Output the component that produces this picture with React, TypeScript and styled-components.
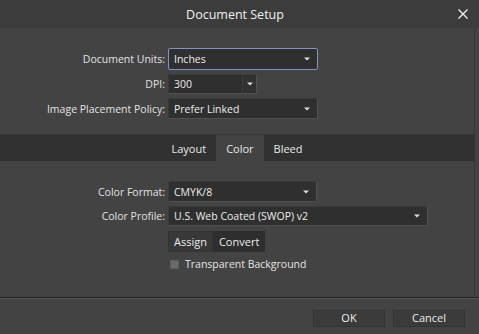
import React from "react";
import styled, { createGlobalStyle } from "styled-components";

const GlobalStyle = createGlobalStyle`
    html, body {
        margin: 0;
        padding: 0;
        background: #434343;
    }
    * {
        box-sizing: border-box;
    }
    body {
        font-family: "Open Sans", "Noto Sans", Arial, sans-serif;
        font-size: 10.5px;
        color: #e4e4e4;
    }
`;

const Arrow = () => (
    <svg width="6" height="4" viewBox="0 0 6 4">
        <path d="M0 0.5 H6 L3 3.5 Z" fill="#dedede" />
    </svg>
);

const App = () => {
    return (
        <>
            <GlobalStyle />
            <Window>
                <TitleBar>
                    <span />
                    <Title>Document Setup</Title>
                    <CloseButton aria-label="close">
                        <svg width="10" height="10" viewBox="0 0 10 10">
                            <path d="M0.5 0.5 L9.5 9.5 M9.5 0.5 L0.5 9.5" stroke="#f2f2f2" strokeWidth="1.3" />
                        </svg>
                    </CloseButton>
                </TitleBar>

                <Body>
                    <Form $top={20}>
                        <Label>Document Units:</Label>
                        <Select $width={150} $height={22} $focused>
                            <span>Inches</span>
                            <Arrow />
                        </Select>
                        <Label>DPI:</Label>
                        <Combo>
                            <ComboText>300</ComboText>
                            <ComboButton>
                                <Arrow />
                            </ComboButton>
                        </Combo>
                        <Label>Image Placement Policy:</Label>
                        <Select $width={150}>
                            <span>Prefer Linked</span>
                            <Arrow />
                        </Select>
                    </Form>

                    <TabStrip>
                        <Tab>Layout</Tab>
                        <Tab $active>Color</Tab>
                        <Tab>Bleed</Tab>
                    </TabStrip>

                    <Form $top={20}>
                        <Label>Color Format:</Label>
                        <Select $width={149} $height={21}>
                            <span>CMYK/8</span>
                            <Arrow />
                        </Select>
                        <Label>Color Profile:</Label>
                        <Select $width={260} $height={20}>
                            <span>U.S. Web Coated (SWOP) v2</span>
                            <Arrow />
                        </Select>
                        <span />
                        <Segmented>
                            <SegButton $active>Assign</SegButton>
                            <SegButton>Convert</SegButton>
                        </Segmented>
                        <span />
                        <CheckRow>
                            <CheckBox />
                            <span>Transparent Background</span>
                        </CheckRow>
                    </Form>

                    <Spacer />
                </Body>

                <Footer>
                    <FooterButton>OK</FooterButton>
                    <FooterButton>Cancel</FooterButton>
                </Footer>
            </Window>
        </>
    );
};

const Window = styled.div`
    width: 479px;
    height: 334px;
    display: flex;
    flex-direction: column;
    background: #434343;
    overflow: hidden;
`;

const TitleBar = styled.div`
    height: 28px;
    flex: none;
    display: grid;
    grid-template-columns: 1fr auto 1fr;
    align-items: center;
    background: #3c3c3c;
    padding-right: 11px;
`;

const Title = styled.div`
    font-size: 12.5px;
    color: #f0f0f0;
    padding-left: 2px;
`;

const CloseButton = styled.div`
    justify-self: end;
    display: flex;
    align-items: center;
    margin-top: -1px;
`;

const Body = styled.div`
    flex: 1;
    display: flex;
    flex-direction: column;
    margin-right: 4px;
    border-right: 1px solid #363636;
`;

const Form = styled.div<{ $top: number }>`
    display: grid;
    grid-template-columns: 165px auto;
    column-gap: 3px;
    row-gap: 4px;
    align-items: center;
    justify-items: start;
    padding-top: ${(p) => p.$top}px;
`;

const Label = styled.div`
    justify-self: end;
    color: #e2e2e2;
    white-space: nowrap;
`;

const Select = styled.div<{ $width: number; $height?: number; $focused?: boolean }>`
    width: ${(p) => p.$width}px;
    height: ${(p) => p.$height ?? 21}px;
    display: flex;
    align-items: center;
    justify-content: space-between;
    padding: 0 7px 0 5px;
    background: #2f2f2f;
    border: 1px solid ${(p) => (p.$focused ? "#7f93c6" : "#3a3a3a")};
    border-right-color: ${(p) => (p.$focused ? "#7f93c6" : "#525252")};
    border-bottom-color: ${(p) => (p.$focused ? "#7f93c6" : "#505050")};
    border-radius: 2px;
    color: #ececec;
`;

const Combo = styled.div`
    width: 89px;
    height: 20px;
    display: flex;
    background: #2f2f2f;
    border: 1px solid #3a3a3a;
    border-right-color: #525252;
    border-bottom-color: #505050;
`;

const ComboText = styled.div`
    flex: 1;
    display: flex;
    align-items: center;
    padding-left: 5px;
    color: #ececec;
`;

const ComboButton = styled.div`
    width: 14px;
    display: flex;
    align-items: center;
    justify-content: center;
    border-left: 1px solid #3d3d3d;
    background: #313131;
`;

const TabStrip = styled.div`
    margin-top: 15px;
    height: 27px;
    display: flex;
    justify-content: center;
    background: #313131;
    border-top: 1px solid #383838;
`;

const Tab = styled.div<{ $active?: boolean }>`
    display: flex;
    align-items: center;
    padding: 0 10px;
    background: ${(p) => (p.$active ? "#434343" : "transparent")};
    color: #e8e8e8;
    font-size: 11px;
`;

const Segmented = styled.div`
    display: flex;
    height: 21px;
    margin-top: 1px;
    background: #2e2e2e;
`;

const SegButton = styled.div<{ $active?: boolean }>`
    display: flex;
    align-items: center;
    padding: 0 5px;
    background: ${(p) => (p.$active ? "#383838" : "#2e2e2e")};
    border: 1px solid ${(p) => (p.$active ? "#333333" : "#2e2e2e")};
    color: #ececec;
    font-size: 11px;
`;

const CheckRow = styled.div`
    display: flex;
    align-items: center;
    gap: 6px;
    padding-left: 2px;
    margin-top: 1px;
    color: #e4e4e4;
`;

const CheckBox = styled.div`
    width: 9px;
    height: 9px;
    background: #6a6a6a;
    border: 1px solid #5a5a5a;
`;

const Spacer = styled.div`
    flex: 1;
`;

const Footer = styled.div`
    height: 37px;
    flex: none;
    display: flex;
    justify-content: flex-end;
    align-items: flex-start;
    gap: 8px;
    padding: 10px 14px 0 0;
    border-top: 1px solid #252525;
    box-shadow: inset 0 1px 0 #565656;
`;

const FooterButton = styled.div`
    width: 72px;
    height: 19px;
    display: flex;
    align-items: center;
    justify-content: center;
    background: #3b3b3b;
    border: 1px solid #333333;
    border-top-color: #4c4c4c;
    color: #ececec;
    font-size: 11px;
`;

export default App;
